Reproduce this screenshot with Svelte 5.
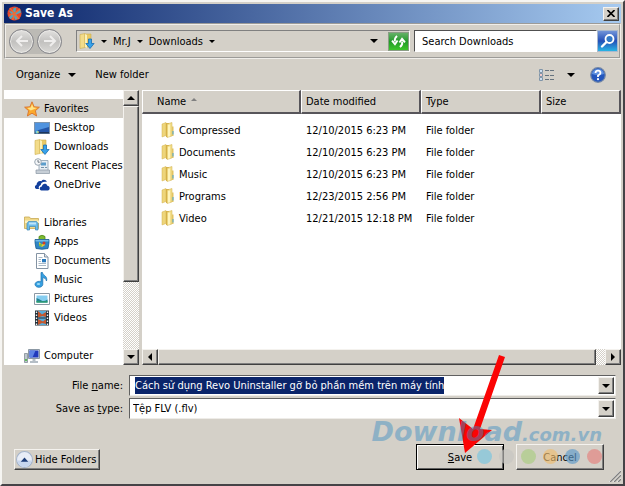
<script>
	import { onMount } from 'svelte'

	const places = [
		{
			name: 'Favorites', icon: 'star', current: true,
			items: [
				{ name: 'Desktop', icon: 'desktop' },
				{ name: 'Downloads', icon: 'downloads' },
				{ name: 'Recent Places', icon: 'recent' },
				{ name: 'OneDrive', icon: 'cloud' }
			]
		},
		{
			name: 'Libraries', icon: 'libraries',
			items: [
				{ name: 'Apps', icon: 'apps' },
				{ name: 'Documents', icon: 'document' },
				{ name: 'Music', icon: 'music' },
				{ name: 'Pictures', icon: 'picture' },
				{ name: 'Videos', icon: 'video' }
			]
		},
		{ name: 'Computer', icon: 'computer', items: [] }
	]

	const folders = [
		{ name: 'Compressed', date: '12/10/2015 6:23 PM' },
		{ name: 'Documents', date: '12/10/2015 6:23 PM' },
		{ name: 'Music', date: '12/10/2015 6:23 PM' },
		{ name: 'Programs', date: '12/23/2015 2:56 PM' },
		{ name: 'Video', date: '12/21/2015 12:18 PM' }
	]

	const dots = ['#76c5e0', '#c6c5c1', '#a9cd80', '#eebd70', '#5d9ac9', '#e57f7c']

	let fileName = $state('Cách sử dụng Revo Uninstaller gỡ bỏ phần mềm trên máy tính')
	let nameInput

	onMount(() => {
		nameInput.focus()
		nameInput.select()
	})
</script>

{#snippet icon(name)}
	<svg class="icon" viewBox="0 0 16 16" aria-hidden="true">
		{#if name === 'star'}
			<path d="M8 .8l2.1 5 5.3.4-4 3.5 1.2 5.3L8 12.2 3.4 15l1.2-5.3-4-3.5 5.3-.4z" fill="#fba92c" stroke="#d9732c" stroke-width=".9" />
			<path d="M8 3l1.4 3.6 3.6.4-6.3 2.5-3.4-2.6 3.4-.3z" fill="#ffe58a" />
		{:else if name === 'desktop'}
			<rect x=".5" y="2.5" width="15" height="11" fill="#2456a8" stroke="#7b93ac" />
			<path d="M1 3h14v4L1 11z" fill="#4f93df" />
			<path d="M1 12h14v1.5H1z" fill="#1d365c" />
			<circle cx="3" cy="12" r="1.6" fill="#6fd0e6" />
			<circle cx="4" cy="12" r=".8" fill="#f1d24b" />
		{:else if name === 'downloads'}
			<path d="M1 1.5l5-1v14l-5 1z" fill="#f3dc8a" stroke="#cfae4d" stroke-width=".6" />
			<path d="M6 1h6v13H6z" fill="#e9c965" stroke="#cfae4d" stroke-width=".6" />
			<path d="M6 1l2 1v13l-2-1z" fill="#fbf1b8" />
			<path d="M9.5 6h3v4.5h2.6L11 15.5l-4.2-5h2.7z" fill="#38a2ea" stroke="#176db5" stroke-width=".8" />
		{:else if name === 'recent'}
			<path d="M5 2.5h9v10H5z" fill="#e8eef4" stroke="#8da0b0" stroke-width=".8" />
			<path d="M7 4.5h5v3H7z" fill="#5c9dcb" />
			<path d="M7 9.5h3m1 0h2" stroke="#7794aa" />
			<path d="M2 12h13.5v3.5H2z" fill="#c6ced6" stroke="#8a97a3" stroke-width=".7" />
			<circle cx="4" cy="4" r="3.3" fill="#f5f7f9" stroke="#9ba7b2" />
			<path d="M4 2v2.2h1.7" stroke="#4d5964" fill="none" stroke-width=".8" />
		{:else if name === 'cloud'}
			<path d="M2.6 12C.4 11.5.4 8.5 2.5 8 2.5 5 5 3.2 7.4 4.2 8.6 2.3 12 2.3 12.8 5c-4-.8-6 1-6 3-2 .5-2.6 2.5-1.7 4z" fill="#123f9c" />
			<path d="M7.3 13.5c-2.3-.4-2-4 .6-4 .4-3.4 4.7-3.4 5.4-.8 2.8 0 3.3 4.3.5 4.8z" fill="#123f9c" />
		{:else if name === 'libraries'}
			<path d="M.5 2h5l1 1.5h8v10H.5z" fill="#f0d887" stroke="#c8aa53" stroke-width=".8" />
			<path d="M1 5.5h14V8H1z" fill="#fdf2c0" />
			<path d="M3 8.5l1.5-2h8l1.5 2V15h-2.5v-3.5h-6V15H3z" fill="#6cbcea" stroke="#3d86b5" stroke-width=".7" />
			<path d="M5 7.5h7v2H5z" fill="#bfe5fa" />
		{:else if name === 'apps'}
			<path d="M5 5V2.5Q8 0 11 2.5V5" fill="#7dbb32" stroke="#4e8518" stroke-width=".8" />
			<path d="M1 5.5h14v3l-1 6Q8 16 2 14.5l-1-6z" fill="#2f86c5" stroke="#175a8f" stroke-width=".8" />
			<path d="M1.5 6h13v1.5h-13z" fill="#72bce8" />
			<path d="M5 8l3 2.5L11 8v3l-3 2-3-2z" fill="#eacb37" />
			<circle cx="10" cy="9" r="1.5" fill="#cc3e2c" />
			<circle cx="6.5" cy="11" r="1.5" fill="#7dc043" />
		{:else if name === 'document'}
			<path d="M2.5.5h8L14 4v11.5H2.5z" fill="#fff" stroke="#8493a3" />
			<path d="M10.5.5V4H14" fill="#dce4ec" stroke="#8493a3" />
			<path d="M4.500 4.500h4m-4 2h2.500m-2.500 2h2.500m-2.500 2h7.500m-7.500 2h7.500" stroke="#93a7b9" stroke-width=".8" />
			<path d="M8 6h4v3.300H8z" fill="#2879bd" />
		{:else if name === 'music'}
			<path d="M7 .5h1.500c.3 3 5.500 3.500 4 8.500-.6-2.300-2-3.200-3.700-3.400v6.900a3.900 3 0 1 1-1.800-2.700z" fill="#359fe0" stroke="#1b70ad" stroke-width=".7" />
			<ellipse cx="4.500" cy="12" rx="1.700" ry="1" fill="#9bdcf8" />
		{:else if name === 'picture'}
			<path d="M.5 2.500h15v11H.5z" fill="#fff" stroke="#8b98a4" />
			<path d="M2.500 4.500h11v7h-11z" fill="#85cdf0" />
			<path d="M2.500 7q3 1 5 2.500t6-1v3h-11z" fill="#218393" />
			<path d="M2.500 10q5 1 11 .2v1.300h-11z" fill="#35a362" />
		{:else if name === 'video'}
			<path d="M1 .5h14v15H1z" fill="#222e38" />
			<path d="M4 1h8v6.500H4zM4 8.500h8v6.500H4z" fill="#57abd9" />
			<path d="M4 1l4 3.500L12 2v5L8.500 6 4 7.500zM4 9l5 2.500L12 9v5l-4-1-4 2z" fill="#c4572d" />
			<path d="M2.500 1.500v14M13.500 1.500v14" stroke="#f0f3f5" stroke-width="1.400" stroke-dasharray="1.500 1.500" />
		{:else if name === 'computer'}
			<path d="M.5 5.500h3v9h-3z" fill="#bec7ce" stroke="#75818b" stroke-width=".7" />
			<path d="M1.200 11h1.600v2H1.200z" fill="#48b83b" />
			<path d="M4.500 1.500h11v9h-11z" fill="#d6dde2" stroke="#8b98a4" />
			<path d="M5.500 2.500h9v7h-9z" fill="#2039bd" />
			<path d="M5.500 2.500h6l-3 7h-3z" fill="#5e83e5" />
			<path d="M8.500 11h3v2H14v2H6v-2h2.500z" fill="#b5bec6" />
		{:else if name === 'folder'}
			<path d="M2 2l4-1.500v13L2 15z" fill="#eed57a" stroke="#d2b14d" stroke-width=".5" />
			<path d="M6 1h3v14H6z" fill="#d7b148" />
			<path d="M7 2l5-1.500v13.500L7 15.500z" fill="#f3df8c" stroke="#cfac48" stroke-width=".5" />
			<path d="M8 3l2-.6v11.800l-2 .6z" fill="#fff4bb" />
			<path d="M12 4.500h1.500V14H12z" fill="#e2c363" />
			<path d="M12.500 9h1v3.500h-1z" fill="#48a5d4" />
		{/if}
	</svg>
{/snippet}

{#snippet arrow(dir)}
	<svg class="arrow {dir}" viewBox="0 0 8 4" aria-hidden="true"><path d="M0 0h8L4 4z" /></svg>
{/snippet}

<main class="window">
	<header class="titlebar">
		<svg class="app-icon" viewBox="0 0 16 16" aria-hidden="true">
			<circle cx="8" cy="8" r="7.500" fill="#e5482c" />
			<path d="M2 5l4 1 1-4 3-.5L9 6l5-2 1 3-5 2 2 4-3 2-2-4-3 3-2-2 3-3z" fill="#53a4ba" />
			<path d="M3 2l5 6-6 2m6-2l6-5m-6 5l5 6M8 8l-2 7" stroke="#f06a35" stroke-width="1.600" fill="none" />
		</svg>
		<h1>Save As</h1>
		<button class="raised close" aria-label="Close">
			<svg viewBox="0 0 8 7" aria-hidden="true"><path d="M.5 0l7 7m0-7l-7 7" stroke="#000" stroke-width="1.600" /></svg>
		</button>
	</header>

	<nav class="addressbar">
		<div class="history">
			<button aria-label="Back">
				<svg viewBox="0 0 16 16" aria-hidden="true"><path d="M14 8H3m5-5L3 8l5 5" /></svg>
			</button>
			<button aria-label="Forward">
				<svg viewBox="0 0 16 16" aria-hidden="true"><path d="M2 8h11M8 3l5 5-5 5" /></svg>
			</button>
		</div>
		<div class="path">
			{@render icon('downloads')}
			<button class="crumb" aria-label="Locations">{@render arrow('small')}</button>
			<button class="crumb">Mr.J {@render arrow('small')}</button>
			<button class="crumb">Downloads {@render arrow('small')}</button>
			<button class="crumb previous" aria-label="Previous locations">{@render arrow('down')}</button>
			<button class="refresh" aria-label="Refresh">
				<svg viewBox="0 0 16 14" aria-hidden="true">
					<path d="M6.500 1Q3.500 3 4 7M1 6l3.200 4L7 6M9.500 13q3-2 2.500-6M9 8l2.800-4L15 8" fill="none" stroke="#fff" stroke-width="2" />
				</svg>
			</button>
		</div>
		<div class="search">
			<input type="text" aria-label="Search Downloads" placeholder="Search Downloads" />
			<button aria-label="Search">
				<svg viewBox="0 0 16 16" aria-hidden="true">
					<circle cx="9.500" cy="6" r="4" fill="#3379c6" stroke="#fff" stroke-width="1.800" />
					<path d="M6.500 9L2 13.500" stroke="#fff" stroke-width="2.400" stroke-linecap="round" />
				</svg>
			</button>
		</div>
	</nav>

	<div class="toolbar">
		<button class="organize">Organize {@render arrow('down')}</button>
		<button>New folder</button>
		<button class="view" aria-label="Change your view">
			<svg viewBox="0 0 16 14" aria-hidden="true">
				<path d="M1.500 1.500h3v3h-3zM1.500 5.500h3v3h-3zM1.500 9.500h3v3h-3z" fill="#fff" stroke="#8095a8" />
				<path d="M2.500 3h1M2.500 11h1" stroke="#357ec1" />
				<path d="M2.500 7h1" stroke="#c33" />
				<path d="M7 2.500h4m1 0h4M7 7.500h4m1 0h4M7 11.500h4m1 0h4" stroke="#66737f" />
			</svg>
			{@render arrow('down')}
		</button>
		<button aria-label="Help">
			<svg class="help" viewBox="0 0 16 16" aria-hidden="true">
				<circle cx="8" cy="8" r="7.300" fill="#2356bd" stroke="#7588a6" stroke-width="1.200" />
				<path d="M2 7a6 5 0 0 1 12 0Q8 9 2 7z" fill="#5e90df" />
				<path d="M5.500 6Q5.700 3.700 8 3.700T10.500 6Q10.500 7.400 8 8.500V10" fill="none" stroke="#fff" stroke-width="1.800" />
				<circle cx="8" cy="12.200" r="1.100" fill="#fff" />
			</svg>
		</button>
	</div>

	<div class="panes">
		<aside class="sidebar">
			<div class="tree">
				{#each places as place}
					<section>
						<a href="#{place.icon}" class="place" class:current={place.current}>{@render icon(place.icon)}{place.name}</a>
						{#each place.items as item}
							<a href="#{item.icon}" class="place child">{@render icon(item.icon)}{item.name}</a>
						{/each}
					</section>
				{/each}
			</div>
			<div class="scrollbar vertical">
				<button class="raised" aria-label="Scroll up">{@render arrow('up')}</button>
				<div class="raised thumb"></div>
				<button class="raised" aria-label="Scroll down">{@render arrow('down')}</button>
			</div>
		</aside>

		<section class="files">
			<table>
				<colgroup><col class="wide" /><col class="mid" /><col class="mid" /><col /></colgroup>
				<thead>
					<tr>
						<th class="sorted">Name {@render arrow('sort')}</th>
						<th>Date modified</th>
						<th>Type</th>
						<th>Size</th>
					</tr>
				</thead>
				<tbody>
					{#each folders as folder}
						<tr>
							<td><span class="folder">{@render icon('folder')}{folder.name}</span></td>
							<td>{folder.date}</td>
							<td>File folder</td>
							<td></td>
						</tr>
					{/each}
				</tbody>
			</table>
			<div class="scrollbar horizontal">
				<button class="raised" aria-label="Scroll left">{@render arrow('left')}</button>
				<div class="raised thumb"></div>
				<button class="raised" aria-label="Scroll right">{@render arrow('right')}</button>
			</div>
		</section>
	</div>

	<form class="fields" onsubmit={(e) => e.preventDefault()}>
		<label for="name">File <u>n</u>ame:</label>
		<div class="combo">
			<input id="name" type="text" bind:this={nameInput} bind:value={fileName} autocomplete="off" spellcheck="false" />
			<button type="button" class="raised" aria-label="Recent names">{@render arrow('down')}</button>
		</div>
		<label for="type">Save as <u>t</u>ype:</label>
		<div class="combo">
			<select id="type">
				<option>Tệp FLV (.flv)</option>
			</select>
			<span class="raised drop">{@render arrow('down')}</span>
		</div>
	</form>

	<footer>
		<button class="raised hide">
			<svg viewBox="0 0 16 16" aria-hidden="true">
				<circle cx="8" cy="8" r="7.500" fill="#e8edf7" stroke="#a3b3cb" />
				<path d="M1.500 9a6.500 6 0 0 0 13 0z" fill="#c7d6ee" />
				<path d="M4.500 10L8 6.200l3.500 3.800z" fill="#1e3d78" />
			</svg>
			Hide Folders
		</button>
		<div class="actions">
			<button class="raised save"><u>S</u>ave</button>
			<button class="raised">Cancel</button>
			<svg class="pointer" viewBox="0 0 56 104" aria-hidden="true">
				<path d="M43 3l6 2-25 72 12 1L9 101 3 66l14 11z" fill="#fb0404" />
			</svg>
			<div class="watermark" aria-hidden="true">
				<span class="brand">Download<small>.com.vn</small></span>
				<div class="dots">
					{#each dots as dot}
						<i style="background: {dot}"></i>
					{/each}
				</div>
			</div>
		</div>
		<svg class="grip" viewBox="0 0 12 12" aria-hidden="true">
			<path d="M0 12L12 0M4 12l8-8M8 12l4-4" stroke="#fff" />
			<path d="M1 12L12 1M5 12l7-7M9 12l3-3" stroke="#808080" stroke-width="1.400" />
		</svg>
	</footer>
</main>

<style>
	:global(body) {
		margin: 0;
		background: #d4d0c8;
	}

	.window {
		box-sizing: border-box;
		min-height: 100vh;
		display: flex;
		flex-direction: column;
		padding: 2px;
		border-style: solid;
		border-width: 2px;
		border-color: #f6f5f2 #454347 #454347 #f6f5f2;
		background: #d4d0c8;
		color: #000;
		font: 11px/17px "DejaVu Sans Condensed", "Noto Sans", sans-serif;
	}

	button,
	input,
	select {
		box-sizing: border-box;
		margin: 0;
		padding: 0;
		border: 0;
		border-radius: 0;
		outline: 0;
		background: none;
		color: inherit;
		font: inherit;
	}

	button {
		display: flex;
		align-items: center;
		justify-content: center;
		white-space: nowrap;
	}

	svg {
		display: block;
		flex: none;
	}

	.icon {
		width: 16px;
		height: 16px;
	}

	.raised {
		box-sizing: border-box;
		background: #d4d0c8;
		border: 1px solid;
		border-color: #f4f2ee #404040 #404040 #f4f2ee;
		box-shadow: inset -1px -1px #808080;
	}

	.arrow {
		width: 8px;
		height: 4px;
	}

	.small {
		width: 6px;
		height: 3px;
	}

	.up {
		transform: rotate(180deg);
	}

	.left {
		transform: rotate(90deg);
	}

	.right {
		transform: rotate(-90deg);
	}

	.titlebar {
		display: flex;
		align-items: center;
		gap: 3px;
		height: 19px;
		padding: 0 2px 0 3px;
		background: linear-gradient(to right, #0a246a, #a6caf0);
		color: #fff;
	}

	.app-icon {
		width: 15px;
		height: 15px;
	}

	h1 {
		flex: 1;
		margin: 0;
		font-size: 12px;
		font-weight: bold;
	}

	.close {
		width: 16px;
		height: 14px;
	}

	.close svg {
		width: 8px;
		height: 7px;
	}

	.addressbar {
		display: flex;
		align-items: center;
		gap: 4px;
		height: 32px;
		padding: 0 1px 0 3px;
		border: 2px groove #f0eeea;
	}

	.history {
		display: flex;
		gap: 3px;
		margin-right: 10px;
		border-radius: 13px;
		background: #bcbab5;
	}

	.history button {
		width: 25px;
		height: 25px;
		border: 1px solid #85858a;
		border-radius: 50%;
		background: linear-gradient(#e3e2e0, #c2c1bf 50%, #dad9d6);
		box-shadow: inset 0 0 0 1px #e9e8e5;
	}

	.history svg {
		width: 16px;
		height: 16px;
		fill: none;
		stroke: #efeeed;
		stroke-width: 2;
	}

	.path {
		flex: 1;
		box-sizing: border-box;
		display: flex;
		align-items: center;
		height: 22px;
		padding: 0 0 0 2px;
		border: 1px solid;
		border-color: #808080 #fff #fff #808080;
	}

	.crumb {
		gap: 6px;
		padding-left: 6px;
	}

	.path .previous {
		margin-left: auto;
		padding-right: 10px;
	}

	.refresh {
		width: 21px;
		height: 19px;
		border: 1px solid #8a9d85;
		background: linear-gradient(#65b168, #239a2a 50%, #3cc52a);
	}

	.refresh svg {
		width: 15px;
		height: 13px;
	}

	.search {
		display: flex;
		width: 204px;
		height: 22px;
	}

	.search input {
		flex: 1;
		min-width: 0;
		padding-left: 7px;
		border: 1px solid;
		border-color: #505050 #fff #fff #505050;
		background: #fff;
	}

	.search input::placeholder {
		color: #000;
		opacity: 1;
	}

	.search button {
		width: 21px;
		border: 1px solid #aab9ce;
		background: linear-gradient(#7194d8, #2450b8 50%, #28b4e4);
	}

	.search svg {
		width: 16px;
		height: 16px;
	}

	.toolbar {
		display: flex;
		align-items: center;
		gap: 19px;
		height: 31px;
		padding: 0 15px 0 12px;
	}

	.organize {
		gap: 8px;
	}

	.view {
		gap: 13px;
		margin-left: auto;
	}

	.toolbar .view svg:first-child {
		width: 16px;
		height: 14px;
	}

	.toolbar .view + button {
		margin-left: -4px;
	}

	.help {
		width: 16px;
		height: 16px;
	}

	.panes {
		display: flex;
		gap: 3px;
	}

	.sidebar {
		display: flex;
		width: 135px;
		background: #fff;
	}

	.tree {
		flex: 1;
		min-width: 0;
		padding-top: 9px;
	}

	.tree section + section {
		margin-top: 19px;
	}

	.place {
		display: flex;
		align-items: center;
		gap: 4px;
		height: 19px;
		padding-left: 20px;
		color: inherit;
		text-decoration: none;
		white-space: nowrap;
	}

	.place.child {
		padding-left: 30px;
	}

	.current {
		background: #d4d0c8;
	}

	.scrollbar {
		display: flex;
		background: repeating-conic-gradient(#fff 0 25%, #d4d0c8 0 50%) 0 0 / 2px 2px;
	}

	.scrollbar button {
		width: 16px;
		height: 16px;
	}

	.vertical {
		flex-direction: column;
		justify-content: space-between;
	}

	.vertical .thumb {
		height: 176px;
		margin-bottom: auto;
	}

	.files {
		flex: 1;
		display: flex;
		flex-direction: column;
		justify-content: space-between;
		background: #fff;
	}

	.horizontal .thumb {
		flex: 1;
		margin-right: 9px;
	}

	table {
		width: 100%;
		table-layout: fixed;
		border-collapse: separate;
		border-spacing: 0;
	}

	.wide {
		width: 159px;
	}

	.mid {
		width: 120px;
	}

	th {
		height: 21px;
		padding: 0 4px;
		background: #d4d0c8;
		border: solid;
		border-width: 1px 2px 2px 1px;
		border-color: #fff #57555a #57555a #fff;
		font-weight: normal;
		text-align: left;
	}

	th.sorted {
		padding-left: 14px;
	}

	.sort {
		display: inline-block;
		width: 6px;
		height: 3px;
		margin: 0 0 4px 2px;
		fill: #808080;
		transform: rotate(180deg);
	}

	td {
		height: 22px;
		padding: 0 5px;
		white-space: nowrap;
	}

	tbody tr:first-child td {
		padding-top: 5px;
	}

	.folder {
		display: flex;
		align-items: center;
		gap: 3px;
		padding-left: 13px;
	}

	.fields {
		display: grid;
		grid-template-columns: 119px 1fr;
		align-items: center;
		gap: 2px 6px;
		padding: 10px 5px 0 0;
	}

	label {
		text-align: right;
	}

	.combo {
		display: flex;
		box-sizing: border-box;
		height: 21px;
		padding: 1px;
		border: 1px solid;
		border-color: #606060 #eeece8 #eeece8 #606060;
		background: #fff;
	}

	.combo input,
	.combo select {
		flex: 1;
		min-width: 0;
		padding-left: 4px;
	}

	.combo select {
		appearance: none;
		padding-left: 2px;
	}

	.combo input::selection {
		background: #0a246a;
		color: #fff;
	}

	.combo .raised {
		display: flex;
		align-items: center;
		justify-content: center;
		width: 16px;
	}

	.drop {
		pointer-events: none;
	}

	footer {
		flex: 1;
		display: flex;
		align-items: flex-start;
		justify-content: space-between;
		padding: 25px 0 0 10px;
	}

	.hide {
		gap: 2px;
		height: 21px;
		margin-top: 5px;
		padding: 0 3px 0 1px;
	}

	.hide svg {
		width: 17px;
		height: 17px;
	}

	.actions {
		position: relative;
		display: flex;
		gap: 12px;
		margin: 0 20px 0 auto;
	}

	.actions button {
		width: 88px;
		height: 26px;
	}

	.save {
		border-color: #000;
		box-shadow: inset 1px 1px #fff, inset -1px -1px #606060;
	}

	/* stamp and pointer lie over the buttons */
	.watermark {
		position: absolute;
		right: 2px;
		bottom: 6px;
		pointer-events: none;
	}

	.brand {
		display: block;
		margin-bottom: 1px;
		color: #3a8cc3;
		font: italic bold 27px/27px "DejaVu Sans", sans-serif;
		white-space: nowrap;
		opacity: 0.45;
	}

	.brand small {
		font-size: 18px;
	}

	.dots {
		display: flex;
		justify-content: flex-end;
		gap: 7px;
	}

	.dots i {
		width: 15px;
		height: 15px;
		border-radius: 50%;
		opacity: 0.65;
	}

	.pointer {
		position: absolute;
		right: 92px;
		bottom: 14px;
		width: 56px;
		height: 104px;
		pointer-events: none;
	}

	.grip {
		align-self: flex-end;
		width: 12px;
		height: 12px;
		margin-left: -15px;
	}
</style>
